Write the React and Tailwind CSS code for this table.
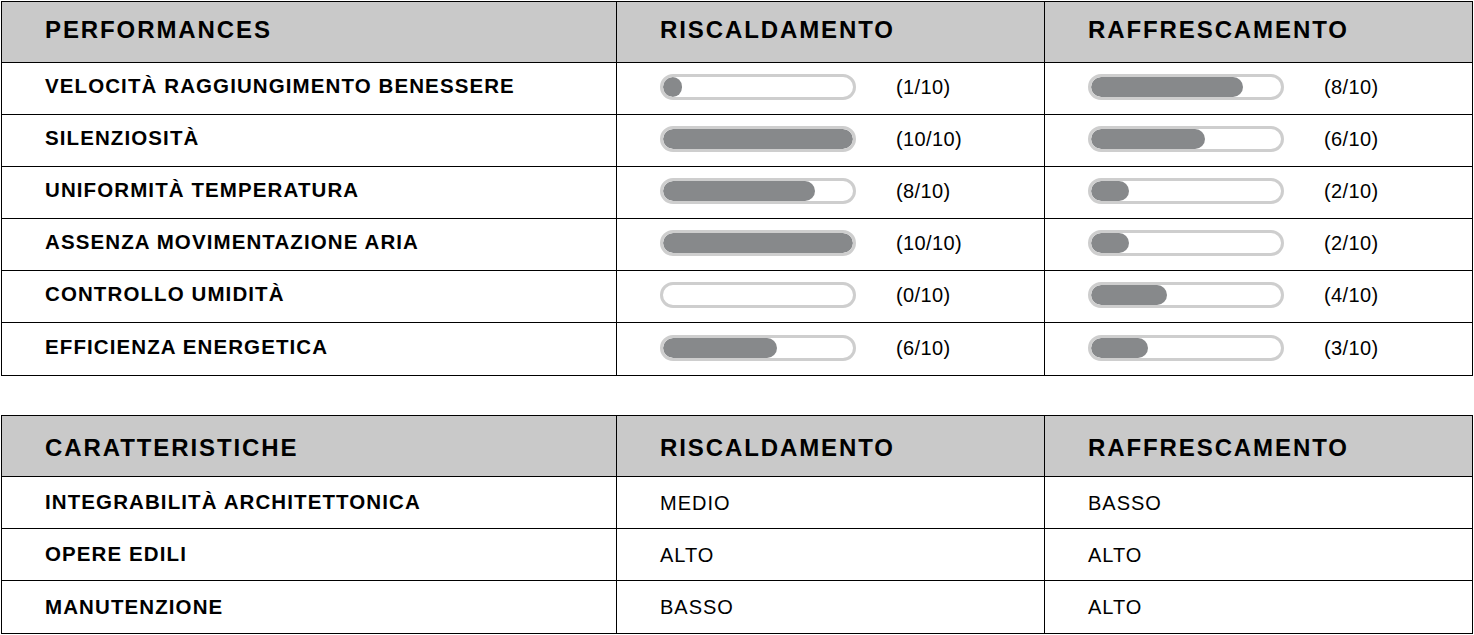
import React from "react";

const performances = [
  { label: "VELOCITÀ RAGGIUNGIMENTO BENESSERE", heat: 1, cool: 8 },
  { label: "SILENZIOSITÀ", heat: 10, cool: 6 },
  { label: "UNIFORMITÀ TEMPERATURA", heat: 8, cool: 2 },
  { label: "ASSENZA MOVIMENTAZIONE ARIA", heat: 10, cool: 2 },
  { label: "CONTROLLO UMIDITÀ", heat: 0, cool: 4 },
  { label: "EFFICIENZA ENERGETICA", heat: 6, cool: 3 },
];

const features = [
  { label: "INTEGRABILITÀ ARCHITETTONICA", heat: "MEDIO", cool: "BASSO" },
  { label: "OPERE EDILI", heat: "ALTO", cool: "ALTO" },
  { label: "MANUTENZIONE", heat: "BASSO", cool: "ALTO" },
];

const font = { fontFamily: '"Liberation Sans", Arial, sans-serif' };

function Bar({ value }) {
  return (
    <div className="flex items-center -mt-[3px]">
      <div className="w-[196px] h-[26px] rounded-full border-[3px] border-[#cecece] bg-white overflow-hidden">
        {value > 0 && (
          <div
            className="h-full rounded-full bg-[#87898b]"
            style={{ width: `${Math.max(value * 19, 19)}px` }}
          />
        )}
      </div>
      <span className="ml-[40px] text-[20px] tracking-[0.4px] text-black">({value}/10)</span>
    </div>
  );
}

function HeaderRow({ title, lower }) {
  const cell = `flex items-center pl-[43px] ${lower ? "pt-[4px]" : "pb-[4px]"}`;
  return (
    <div className="grid grid-cols-[614px_428px_1fr] h-[61px] bg-[#c9c9c9] border-b border-black text-[24px] font-bold tracking-[1.9px] text-black">
      <div className={cell}>{title}</div>
      <div className={`${cell} border-l border-black`}>RISCALDAMENTO</div>
      <div className={`${cell} border-l border-black`}>RAFFRESCAMENTO</div>
    </div>
  );
}

function Row({ label, children, last, flat }) {
  return (
    <div className={`grid grid-cols-[614px_428px_1fr] h-[52px] ${last ? "" : "border-b border-black"}`}>
      <div
        className={`flex items-center pl-[43px] text-[20.5px] font-bold tracking-[1.1px] text-black ${
          flat ? "" : "pb-[4px]"
        }`}
      >
        {label}
      </div>
      {children}
    </div>
  );
}

export default function App() {
  return (
    <div className="bg-white w-[1474px] h-[635px] pl-px pt-px" style={font}>
      {/* Performances */}
      <div className="w-[1472px] border border-black">
        <HeaderRow title="PERFORMANCES" />
        {performances.map((r, i) => (
          <Row key={r.label} label={r.label} last={i === performances.length - 1}>
            <div className="flex items-center pl-[43px] border-l border-black">
              <Bar value={r.heat} />
            </div>
            <div className="flex items-center pl-[43px] border-l border-black">
              <Bar value={r.cool} />
            </div>
          </Row>
        ))}
      </div>

      {/* Caratteristiche */}
      <div className="w-[1472px] border border-black mt-[39px]">
        <HeaderRow title="CARATTERISTICHE" lower />
        {features.map((r, i) => (
          <Row key={r.label} label={r.label} last={i === features.length - 1} flat>
            <div className="flex items-center pl-[43px] border-l border-black text-[20px] tracking-[1px] text-black">
              {r.heat}
            </div>
            <div className="flex items-center pl-[43px] border-l border-black text-[20px] tracking-[1px] text-black">
              {r.cool}
            </div>
          </Row>
        ))}
      </div>
    </div>
  );
}
